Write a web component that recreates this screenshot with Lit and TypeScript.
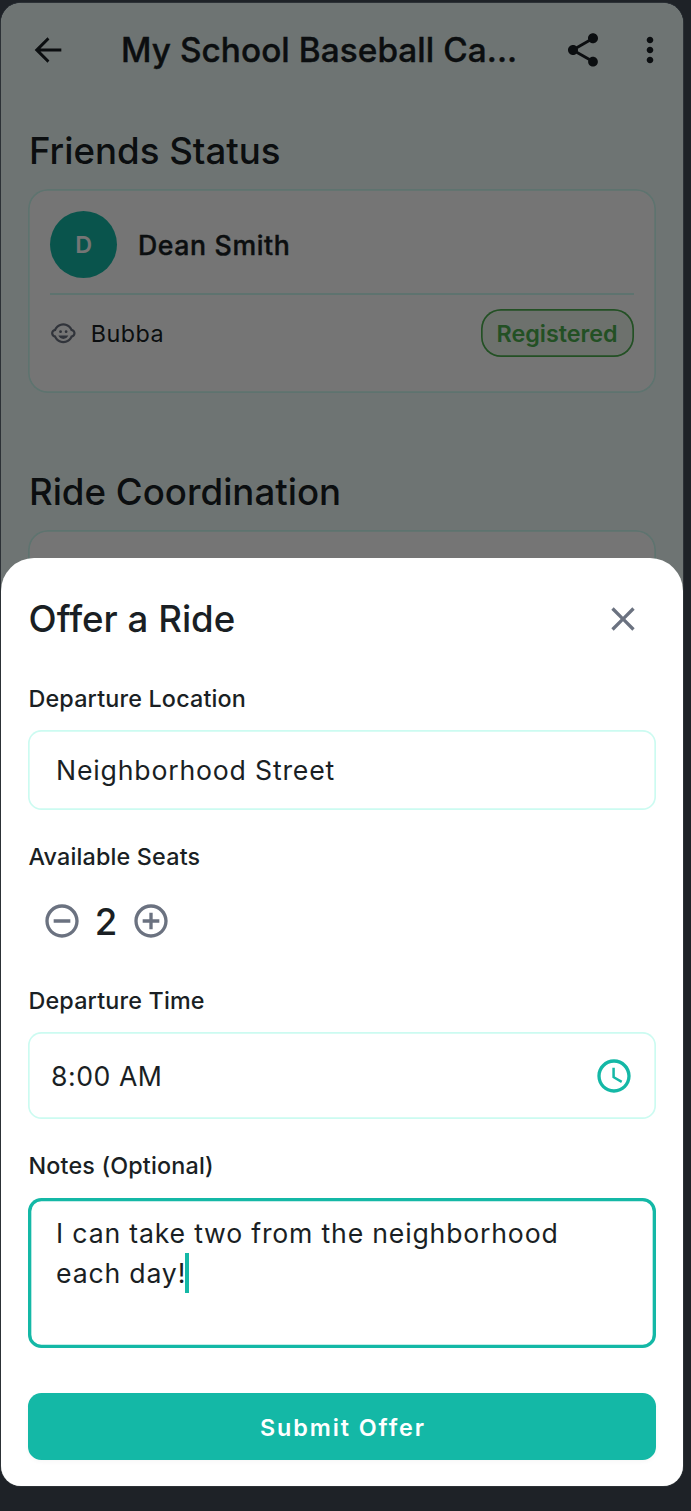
import { LitElement, html, css, svg } from "lit";
import { customElement, property, state } from "lit/decorators.js";

const ICONS: Record<string, unknown> = {
  back: svg`<path d="M20 11.05H7.5l5.35-5.35L11.7 4.3 4 12l7.7 7.7 1.15-1.4-5.35-5.35H20v-1.9z"/>`,
  share: svg`<path d="M18 16.08c-.76 0-1.44.3-1.96.77L8.91 12.7c.05-.23.09-.46.09-.7s-.04-.47-.09-.7l7.05-4.11c.54.5 1.25.81 2.04.81 1.66 0 3-1.34 3-3s-1.34-3-3-3-3 1.34-3 3c0 .24.04.47.09.7L8.04 9.81C7.5 9.31 6.79 9 6 9c-1.66 0-3 1.34-3 3s1.34 3 3 3c.79 0 1.5-.31 2.04-.81l7.12 4.16c-.05.21-.08.43-.08.65 0 1.61 1.31 2.92 2.92 2.92s2.92-1.31 2.92-2.92-1.31-2.92-2.92-2.92z"/>`,
  more: svg`<path d="M12 8c1.1 0 2-.9 2-2s-.9-2-2-2-2 .9-2 2 .9 2 2 2zm0 2c-1.1 0-2 .9-2 2s.9 2 2 2 2-.9 2-2-.9-2-2-2zm0 6c-1.1 0-2 .9-2 2s.9 2 2 2 2-.9 2-2-.9-2-2-2z"/>`,
  child: svg`<circle cx="14.5" cy="10.5" r="1.25"/><circle cx="9.5" cy="10.5" r="1.25"/><path d="M22.94 12.66c.04-.21.06-.43.06-.66s-.02-.45-.06-.66c-.25-1.51-1.36-2.74-2.81-3.17-.53-1.12-1.28-2.1-2.19-2.91C16.36 3.85 14.28 3 12 3s-4.36.85-5.94 2.26c-.92.81-1.67 1.8-2.19 2.91-1.45.43-2.56 1.65-2.81 3.17-.04.21-.06.43-.06.66s.02.45.06.66c.25 1.51 1.36 2.74 2.81 3.17.52 1.11 1.27 2.09 2.17 2.89C7.62 20.14 9.71 21 12 21s4.38-.86 5.97-2.28c.9-.8 1.65-1.79 2.17-2.89 1.44-.43 2.55-1.65 2.8-3.17zM19 14c-.1 0-.19-.02-.29-.03-.2.67-.49 1.29-.86 1.86C16.6 17.74 14.45 19 12 19s-4.6-1.26-5.85-3.17c-.37-.57-.66-1.19-.86-1.86-.1.01-.19.03-.29.03-1.1 0-2-.9-2-2s.9-2 2-2c.1 0 .19.02.29.03.2-.67.49-1.29.86-1.86C7.4 6.26 9.55 5 12 5s4.6 1.26 5.85 3.17c.37.57.66 1.19.86 1.86.1-.01.19-.03.29-.03 1.1 0 2 .9 2 2s-.9 2-2 2zM7.5 14c.76 1.77 2.49 3 4.5 3s3.74-1.23 4.5-3h-9z"/>`,
  close: svg`<path d="M19 6.41L17.59 5 12 10.59 6.41 5 5 6.41 10.59 12 5 17.59 6.41 19 12 13.41 17.59 19 19 17.59 13.41 12z"/>`,
  minus: svg`<path d="M7 11v2h10v-2H7zm5-9C6.48 2 2 6.48 2 12s4.48 10 10 10 10-4.48 10-10S17.52 2 12 2zm0 18c-4.41 0-8-3.59-8-8s3.59-8 8-8 8 3.59 8 8-3.59 8-8 8z"/>`,
  plus: svg`<path d="M13 7h-2v4H7v2h4v4h2v-4h4v-2h-4V7zm-1-5C6.48 2 2 6.48 2 12s4.48 10 10 10 10-4.48 10-10S17.52 2 12 2zm0 18c-4.41 0-8-3.59-8-8s3.59-8 8-8 8 3.59 8 8-3.59 8-8 8z"/>`,
  clock: svg`<path d="M11.99 2C6.47 2 2 6.48 2 12s4.47 10 9.99 10C17.52 22 22 17.52 22 12S17.52 2 11.99 2zM12 20c-4.42 0-8-3.58-8-8s3.58-8 8-8 8 3.58 8 8-3.58 8-8 8zm.5-13H11v6l5.25 3.15.75-1.23-4.5-2.67z"/>`,
};

@customElement("md-icon")
class MdIcon extends LitElement {
  @property() name = "";
  static styles = css`
    :host { display: block; width: 40px; height: 40px; flex: none; }
    .glyph { display: block; width: 100%; height: 100%; fill: currentColor; }
  `;
  render() {
    return html`<svg class="glyph" viewBox="0 0 24 24">${ICONS[this.name]}</svg>`;
  }
}

@customElement("event-page")
class EventPage extends LitElement {
  static styles = css`
    :host { display: block; background: #f0fdfa; color: #1a1f24; }
    .bar { height: 93px; display: flex; align-items: center; padding: 0 13.3px 0 27px; }
    .title { flex: 1; margin: 0; padding-left: 53px; font-size: 33.33px; font-weight: 500; letter-spacing: 0.07px; -webkit-text-stroke: 0.4px currentColor; white-space: nowrap; }
    .share { margin-right: 26.9px; }
    .body { padding: 0 27.4px 0 27.2px; }
    .heading { margin: 0; padding-left: 0.7px; font-size: 36.67px; font-weight: 500; line-height: 46px; white-space: nowrap; }
    .first { padding-top: 32px; }
    .second { padding-top: 75.7px; }
    .card { margin-top: 15.4px; height: 204px; box-sizing: border-box; padding: 21.6px 22px; border-radius: 20px; background: #fff; box-shadow: inset 0 0 0 1.67px #ccfbf1; }
    .person { display: flex; align-items: center; gap: 20.7px; padding-bottom: 14.7px; border-bottom: 2px solid #ccfbf1; }
    .avatar { width: 67px; height: 67px; border-radius: 50%; background: #14b8a6; color: #fff; display: grid; place-items: center; font-size: 23.3px; font-weight: 600; }
    .name { padding-top: 1.4px; font-size: 26.67px; font-weight: 500; letter-spacing: 0.65px; -webkit-text-stroke: 0.4px currentColor; }
    .child { display: flex; align-items: center; padding-top: 14.5px; font-size: 23.33px; letter-spacing: 0.5px; }
    .face { width: 26.67px; height: 26.67px; color: #6b7280; margin: 0 13.5px 0 0.3px; }
    .kid { flex: 1; }
    .pill { height: 48px; width: 153px; box-sizing: border-box; display: grid; place-items: center; border-radius: 20px; color: #4caf50; background: rgba(76, 175, 80, 0.1); box-shadow: inset 0 0 0 1.67px #4caf50; font-weight: 600; letter-spacing: 0; }
  `;
  render() {
    return html`
      <header class="bar">
        <md-icon name="back"></md-icon>
        <h1 class="title">My School Baseball Ca...</h1>
        <md-icon class="share" name="share"></md-icon>
        <md-icon name="more"></md-icon>
      </header>
      <div class="body">
        <h2 class="heading first">Friends Status</h2>
        <section class="card">
          <div class="person"><span class="avatar">D</span><span class="name">Dean Smith</span></div>
          <div class="child">
            <md-icon class="face" name="child"></md-icon>
            <span class="kid">Bubba</span>
            <span class="pill">Registered</span>
          </div>
        </section>
        <h2 class="heading second">Ride Coordination</h2>
        <section class="card"></section>
      </div>
    `;
  }
}

@customElement("ride-sheet")
class RideSheet extends LitElement {
  @state() seats = 2;
  static styles = css`
    :host { display: block; background: #fff; color: #1a1f24; border-radius: 33px 33px 0 0; box-sizing: border-box; height: 927.7px; padding: 37.7px 27.3px 0; }
    .head { display: flex; align-items: center; justify-content: space-between; height: 46px; padding: 0 13px 0 0.3px; }
    .title { margin: 0; font-size: 36.67px; font-weight: 500; line-height: 44px; padding-bottom: 1px; }
    .grey { color: #6b7280; }
    .label { display: block; padding-left: 0.2px; font-size: 23.33px; font-weight: 500; letter-spacing: 0.17px; line-height: 30px; white-space: nowrap; }
    .l1 { margin-top: 42px; }
    .l2 { margin-top: 32px; }
    .l3 { margin-top: 45px; }
    .l4 { margin-top: 32px; }
    .box { box-sizing: border-box; border-radius: 13.33px; box-shadow: inset 0 0 0 1.67px #ccfbf1; font-size: 26.67px; letter-spacing: 0.8px; white-space: nowrap; }
    .place { margin-top: 16px; height: 80px; padding: 0 27.8px; display: flex; align-items: center; }
    .stepper { margin-top: 29px; height: 40px; padding-left: 13.3px; display: flex; align-items: center; }
    .count { width: 49px; text-align: center; font-size: 36.67px; font-weight: 500; }
    .time { margin-top: 16px; height: 87px; padding: 0 21.8px 0 22.8px; display: flex; align-items: center; justify-content: space-between; letter-spacing: 0.5px; }
    .clock { color: #14b8a6; }
    .notes { margin-top: 17px; height: 150px; padding: 15px 27.8px; line-height: 40px; box-shadow: inset 0 0 0 3.33px #14b8a6; }
    .caret { display: inline-block; width: 4px; height: 40px; margin-left: -1px; vertical-align: top; background: #14b8a6; }
    .submit { display: block; width: 100%; height: 66.5px; margin-top: 45px; padding: 2px 0 0 2px; border: 0; border-radius: 13.33px; background: #14b8a6; color: #fff; font: 600 23.33px Inter, sans-serif; letter-spacing: 1.93px; box-shadow: 0 2px 4px rgba(0, 0, 0, 0.03); }
  `;
  render() {
    return html`
      <div class="head"><h2 class="title">Offer a Ride</h2><md-icon class="grey" name="close"></md-icon></div>
      <span class="label l1">Departure Location</span>
      <div class="box place">Neighborhood Street</div>
      <span class="label l2">Available Seats</span>
      <div class="stepper">
        <md-icon class="grey" name="minus" @click=${() => (this.seats = Math.max(1, this.seats - 1))}></md-icon>
        <span class="count">${this.seats}</span>
        <md-icon class="grey" name="plus" @click=${() => this.seats++}></md-icon>
      </div>
      <span class="label l3">Departure Time</span>
      <div class="box time"><span>8:00 AM</span><md-icon class="clock" name="clock"></md-icon></div>
      <span class="label l4">Notes (Optional)</span>
      <div class="box notes">I can take two from the neighborhood<br />each day!<span class="caret"></span></div>
      <button class="submit">Submit Offer</button>
    `;
  }
}

@customElement("app-root")
class AppRoot extends LitElement {
  static styles = css`
    :host { display: block; height: 1511px; box-sizing: border-box; padding: 3px 8px 25px 1px; background: #1e2227; font-family: Inter, sans-serif; overflow: hidden; }
    .phone { display: grid; grid-template: minmax(0, 1fr) / minmax(0, 1fr); height: 1483px; border-radius: 20px; overflow: hidden; box-shadow: 0 0 0 1px #2c3136; }
    .layer { grid-area: 1 / 1; min-height: 0; }
    .scrim { background: rgba(0, 0, 0, 0.54); }
    .sheet { align-self: end; }
  `;
  render() {
    return html`
      <main class="phone">
        <event-page class="layer"></event-page>
        <div class="layer scrim"></div>
        <ride-sheet class="layer sheet"></ride-sheet>
      </main>
    `;
  }
}
